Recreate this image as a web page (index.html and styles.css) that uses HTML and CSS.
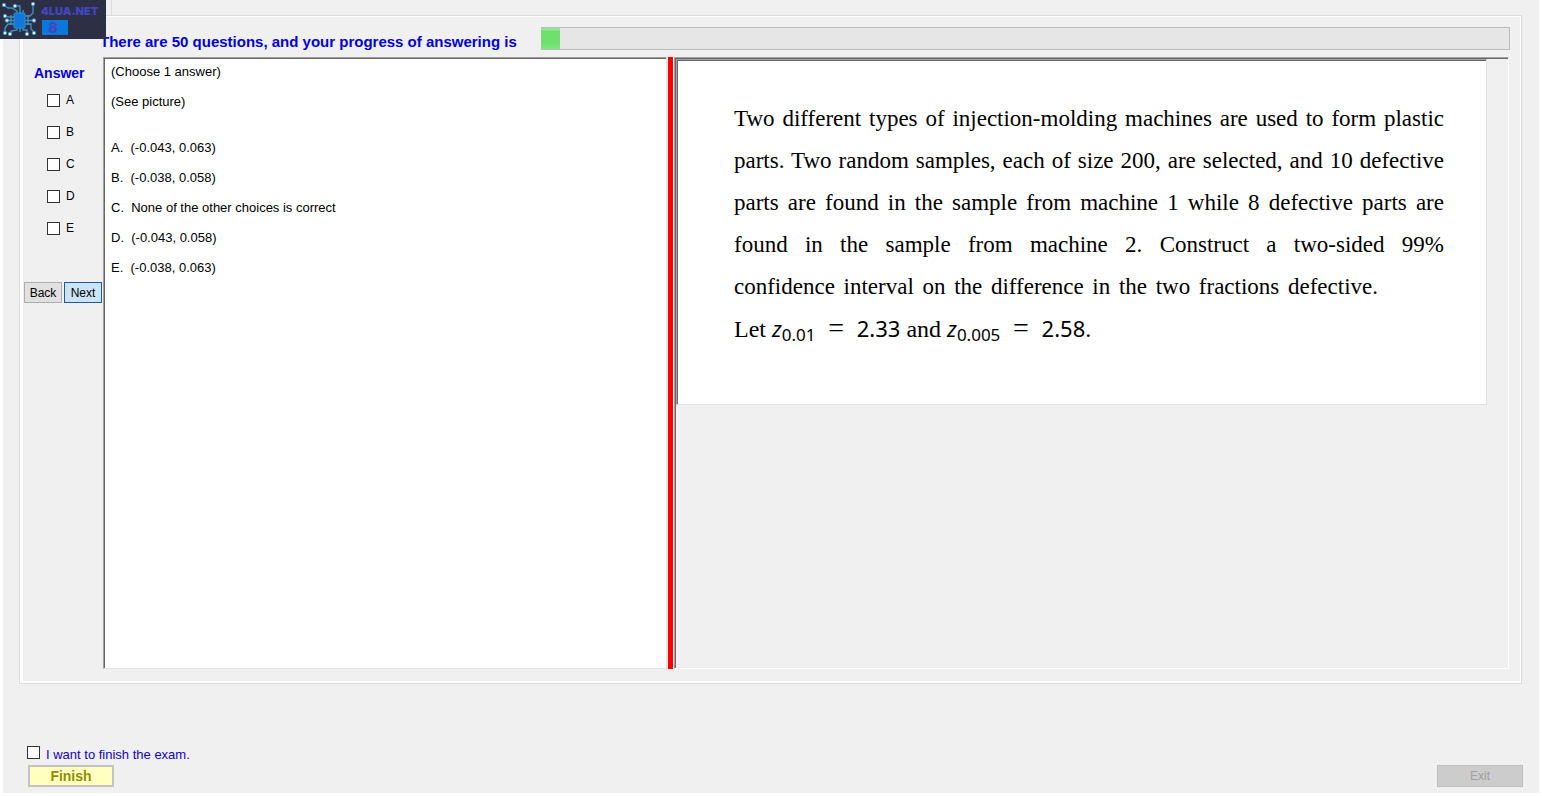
FILE: index.html
```html
<!DOCTYPE html>
<html lang="en">
<head>
<meta charset="utf-8">
<title>Exam</title>
<link rel="stylesheet" href="styles.css">
</head>
<body>
<div class="logo">
  <svg class="logo-chip" viewBox="0 0 36 37" aria-hidden="true">
    <g fill="none" stroke="#3f93c4" stroke-width="1.300">
      <path d="M17 13V11L12 8H8L5 6M20 13V6H15M23 13V10M25 16H30L33 13V5M14 17H9L6 16M14 20.500H7M14 24H8L5 28V32M25 20.500H34M25 24H31V29L34 32M17 28V30L11 31V34M20 28V32M23 28V30H27V33"/>
      <path d="M11 15V25M28 15V25"/>
    </g>
    <rect x="14" y="13" width="11" height="15" rx="1" fill="#0f78dc" stroke="#2f8bd4"/>
    <g fill="#d9f3ff" stroke="#4a9cca">
      <circle cx="4" cy="5" r="1.700"/><circle cx="15" cy="6" r="1.700"/><circle cx="33" cy="4" r="1.700"/><circle cx="5" cy="16" r="1.700"/><circle cx="7" cy="20.500" r="1.700"/><circle cx="34" cy="20.500" r="1.700"/><circle cx="5" cy="33" r="1.700"/><circle cx="10" cy="34" r="1.700"/><circle cx="27" cy="34" r="1.700"/><circle cx="34" cy="33" r="1.700"/>
    </g>
  </svg>
  <div class="logo-words">
    <span class="logo-name">4LUA.NET</span>
    <span class="logo-num">8</span>
  </div>
</div>
<main class="window">
  <div class="tab-edge"></div>
  <section class="group">
    <div class="progress-row">
      <span class="progress-label" id="progress-label">There are 50 questions, and your progress of answering is</span>
      <div class="progress" role="progressbar" aria-labelledby="progress-label" aria-valuenow="2" aria-valuemin="0" aria-valuemax="100">
        <div class="progress-fill" style="width: 2%"></div>
      </div>
    </div>
    <div class="work">
      <div class="answers">
        <h2 class="answers-title">Answer</h2>
        <div class="options">
          <label class="option"><input class="box" type="checkbox">A</label>
          <label class="option"><input class="box" type="checkbox">B</label>
          <label class="option"><input class="box" type="checkbox">C</label>
          <label class="option"><input class="box" type="checkbox">D</label>
          <label class="option"><input class="box" type="checkbox">E</label>
        </div>
        <div class="nav">
          <button class="btn" type="button">Back</button>
          <button class="btn btn-next" type="button">Next</button>
        </div>
      </div>
      <article class="pane question">
        <p>(Choose 1 answer)</p>
        <p class="see">(See picture)</p>
        <p>A.&nbsp; (-0.043, 0.063)</p>
        <p>B.&nbsp; (-0.038, 0.058)</p>
        <p>C.&nbsp; None of the other choices is correct</p>
        <p>D.&nbsp; (-0.043, 0.058)</p>
        <p>E.&nbsp; (-0.038, 0.063)</p>
      </article>
      <div class="splitter"></div>
      <div class="pane viewer">
        <div class="pane sheet">
          <p class="line">Two different types of injection-molding machines are used to form plastic</p>
          <p class="line">parts. Two random samples, each of size 200, are selected, and 10 defective</p>
          <p class="line">parts are found in the sample from machine 1 while 8 defective parts are</p>
          <p class="line">found in the sample from machine 2. Construct a two-sided 99%</p>
          <p class="line short">confidence interval on the difference in the two fractions defective.</p>
          <p class="line last">Let <span class="math"><i>z</i><sub>0.01</sub> <span class="eq">=</span> 2.33</span> and <span class="math"><i>z</i><sub>0.005</sub> <span class="eq">=</span> 2.58</span>.</p>
        </div>
      </div>
    </div>
  </section>
  <footer class="footer">
    <div class="finish-area">
      <label class="confirm"><input class="box" type="checkbox">I want to finish the exam.</label>
      <button class="big-btn finish" type="button">Finish</button>
    </div>
    <button class="big-btn exit" type="button" disabled>Exit</button>
  </footer>
</main>
</body>
</html>
```
FILE: styles.css
```css
* { box-sizing: border-box; }
body {
  margin: 0;
  background: #fff;
  font: 13px/16px "Liberation Sans", Arial, sans-serif;
  color: #000;
}
p, h2 { margin: 0; }
.window {
  display: flex;
  flex-direction: column;
  min-height: calc(100vh - 3px);
  margin: 0 3px;
  background: #f0f0f0;
}
.tab-edge {
  height: 15px;
  margin-left: 108px;
  border-left: 1px solid #dcdcdc;
}
.logo {
  position: absolute;
  top: 0;
  left: 0;
  z-index: 1;
  display: flex;
  gap: 5px;
  width: 106px;
  height: 39px;
  background: #2d2f45;
}
.logo-chip { flex: none; width: 36px; height: 37px; }
.logo-words {
  display: flex;
  flex-direction: column;
  align-items: flex-start;
  padding-top: 4px;
  color: #4347bd;
  font-family: Inter, sans-serif;
  font-weight: 900;
}
.logo-name { font-size: 11px; line-height: 14px; }
.logo-num {
  width: 26px;
  height: 15px;
  margin: 2px 0 0 1px;
  padding-right: 4px;
  background: #0878dc;
  font-size: 14px;
  line-height: 15px;
  text-align: center;
}
.group {
  display: flex;
  flex: 1;
  flex-direction: column;
  margin: 0 17px 0 16px;
  padding: 10px 9px 11px 0;
  border: 1px solid #dcdcdc;
  box-shadow: inset 0 1px #fff, inset 3px 0 #fff, inset -1px -2px #fff;
}
.progress-row {
  display: flex;
  height: 31px;
  padding: 1px 2px 7px 80px;
}
.progress-label {
  flex: none;
  width: 441px;
  padding-top: 7px;
  color: #0000d8;
  font-size: 15px;
  font-weight: 700;
  white-space: nowrap;
}
.progress {
  flex: 1;
  height: 23px;
  border: 1px solid #bcbcbc;
  border-left: 0;
  background: #e6e6e6;
}
.progress-fill {
  height: 100%;
  background: linear-gradient(#90e890 2px, #6ee06e 3px, #6ee06e 70%, #7ee67e);
}
.work {
  display: grid;
  grid-template-columns: 80px minmax(0, 564fr) 7px minmax(0, 835fr);
  flex: 1;
  padding: 0 3px 3px;
}
.answers-title {
  padding: 8px 0 0 11px;
  color: #0000e0;
  font-size: 14px;
  line-height: 16px;
}
.options {
  display: grid;
  gap: 16px;
  padding: 11px 0 46px 24px;
}
.option { display: flex; align-items: center; gap: 6px; font-size: 12px; }
.box {
  appearance: none;
  flex: none;
  width: 13px;
  height: 13px;
  margin: 0;
  border: 1px solid #333;
  background: #fff;
}
.nav { display: flex; gap: 2px; padding-left: 1px; }
.btn {
  width: 38px;
  height: 21px;
  padding: 0;
  border: 1px solid #adadad;
  background: #e1e1e1;
  color: #000;
  font: 12px/16px "Liberation Sans", Arial, sans-serif;
}
.btn-next { border-color: #1c5c9a; background: #cce4f7; }
.pane {
  border: 1px solid;
  border-color: #a0a0a0 #e2e2e2 #e2e2e2 #a0a0a0;
  box-shadow: inset 1px 1px #696969;
}
.question {
  padding: 6px 7px;
  background: #fff;
}
.question p { margin-bottom: 14px; }
.question .see { margin-bottom: 30px; }
.splitter {
  margin: 0 1px;
  background: #f00;
}
.viewer { padding: 1px 0 0 1px; border-right-color: #fff; border-bottom-color: #fff; }
.sheet {
  max-width: 811px;
  padding: 38px 42px 54px 57px;
  background: #fff;
  font: 23px/42px "Liberation Serif", "Times New Roman", serif;
}
.line { text-align: justify; text-align-last: justify; white-space: nowrap; }
.line.short { padding-right: 66px; }
.line.last { font-size: 24px; text-align-last: left; }
.math { font-family: "Noto Sans", sans-serif; font-size: 22px; line-height: 24px; }
.math sub { font-size: 17px; line-height: 16px; vertical-align: -4px; }
.eq { margin: 0 7px; font-family: "Liberation Serif", "Times New Roman", serif; font-size: 28px; }
.footer {
  display: flex;
  justify-content: space-between;
  align-items: flex-end;
  padding: 62px 16px 6px 24px;
}
.confirm {
  display: flex;
  align-items: flex-start;
  gap: 6px;
  margin-bottom: 1px;
  color: #1000c8;
  line-height: 18px;
}
.big-btn {
  display: block;
  width: 86px;
  height: 22px;
  padding: 0;
  font-family: "Liberation Sans", Arial, sans-serif;
}
.finish {
  margin-left: 1px;
  border: 2px solid #c4c4c4;
  background: #ffffc0;
  color: #8f8f00;
  font-size: 14px;
  font-weight: 700;
}
.exit {
  border: 1px solid #bfbfbf;
  background: #ccc;
  color: #a0a0a0;
  font-size: 12px;
}
```
